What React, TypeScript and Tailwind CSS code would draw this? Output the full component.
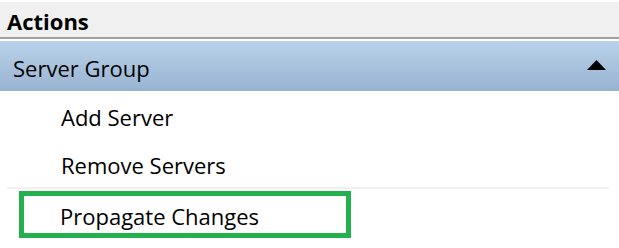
export default function App() {
  return (
    <div
      className="w-[619px] h-[248px] overflow-hidden bg-white pt-[2px] text-black"
      style={{ fontFamily: '"Open Sans", "Noto Sans", sans-serif' }}
    >
      {/* panel title */}
      <div className="flex h-[35px] items-center bg-[#f0f0f0] pl-[7px] pt-[3px] text-[22px] font-bold leading-none">
        Actions
      </div>
      <div className="h-[2px] bg-[#a0a0a0]" />
      <div className="h-[2px]" />

      {/* group header */}
      <div className="flex h-[50px] items-center justify-between bg-gradient-to-b from-[#bad3eb] to-[#98b3d1] pl-[13px] pr-[13px] text-[22px] leading-none">
        <span className="pt-[4px]">Server Group</span>
        <svg width="19" height="10" viewBox="0 0 19 10" className="mb-[2px]">
          <polygon points="9.5,0 19,10 0,10" fill="#000" />
        </svg>
      </div>

      <ul className="text-[22px] leading-none">
        <li className="flex h-[48px] items-center pl-[61px] pt-[3px]">Add Server</li>
        <li className="flex h-[48px] items-center pl-[61px] pt-[3px]">Remove Servers</li>
      </ul>
      <div className="ml-[7px] mr-[10px] h-[2px] bg-[#f0f0f0]" />
      <div className="ml-[19px] mt-[2px] flex h-[47px] w-[332px] items-center border-[5px] border-[#22b14c] pl-[36px] pt-[2px] text-[22px] leading-none">
        Propagate Changes
      </div>
    </div>
  );
}
